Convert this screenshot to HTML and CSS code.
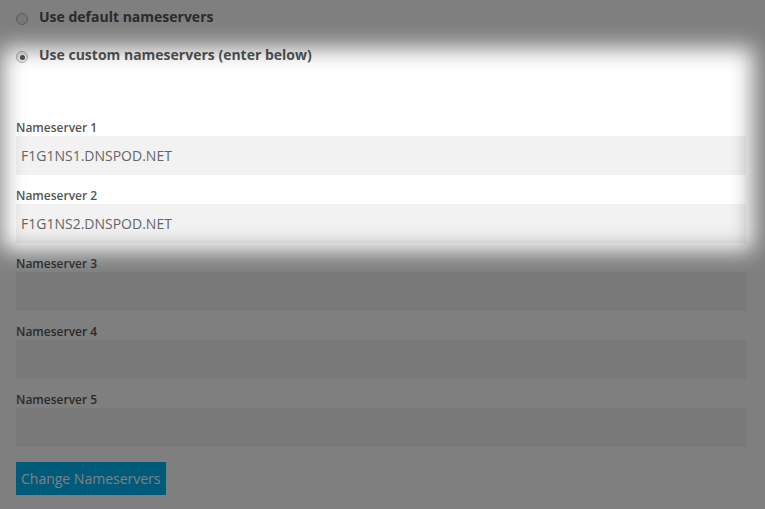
FILE: index.html
```html
<!DOCTYPE html>
<html lang="en">
<head>
<meta charset="utf-8">
<title>Nameservers</title>
<link rel="stylesheet" href="styles.css">
</head>
<body>
<form class="ns-form">
  <div class="radios">
    <label class="radio-row"><input class="radio" type="radio" name="ns"><span>Use default nameservers</span></label>
    <label class="radio-row"><input class="radio" type="radio" name="ns" checked><span>Use custom nameservers (enter below)</span></label>
  </div>
  <div class="fields">
    <div class="field"><label class="field-label">Nameserver 1</label><input class="field-input" type="text" value="F1G1NS1.DNSPOD.NET"></div>
    <div class="field"><label class="field-label">Nameserver 2</label><input class="field-input" type="text" value="F1G1NS2.DNSPOD.NET"></div>
    <div class="field"><label class="field-label">Nameserver 3</label><input class="field-input" type="text" value=""></div>
    <div class="field"><label class="field-label">Nameserver 4</label><input class="field-input" type="text" value=""></div>
    <div class="field"><label class="field-label">Nameserver 5</label><input class="field-input" type="text" value=""></div>
  </div>
  <button class="btn-primary" type="button">Change Nameservers</button>
</form>
<div class="tour-overlay"><div class="tour-hole"></div></div>
</body>
</html>
```

FILE: styles.css
```css
html, body {
  margin: 0;
  padding: 0;
  background: #ffffff;
}
body {
  font-family: "Open Sans", "Liberation Sans", sans-serif;
  color: #555555;
  width: 765px;
  height: 509px;
  overflow: hidden;
}
.ns-form {
  padding: 7px 19px 0 16px;
  display: flex;
  flex-direction: column;
}
.radios {
  display: flex;
  flex-direction: column;
  gap: 18px;
}
.radio-row {
  display: block;
  font-size: 14px;
  font-weight: 700;
  line-height: 20px;
  color: #555555;
}
.radio {
  -webkit-appearance: none;
  appearance: none;
  width: 12px;
  height: 12px;
  margin: 0 11px 0 0;
  border: 1px solid #b3b3b3;
  border-radius: 50%;
  background: #eeeeee;
  box-sizing: border-box;
  vertical-align: -3px;
  position: relative;
}
.radio:checked::after {
  content: "";
  position: absolute;
  left: 2.5px;
  top: 2.5px;
  width: 5px;
  height: 5px;
  border-radius: 50%;
  background: #555555;
}
.fields {
  margin-top: 54px;
  display: flex;
  flex-direction: column;
  gap: 12px;
}
.field {
  display: flex;
  flex-direction: column;
}
.field-label {
  font-size: 12px;
  font-weight: 600;
  line-height: 17px;
  color: #555555;
}
.field-input {
  height: 39px;
  box-sizing: border-box;
  border: none;
  background: #f2f2f2;
  padding: 0 5px;
  font-family: "Open Sans", "Liberation Sans", sans-serif;
  font-size: 14px;
  color: #666666;
  outline: none;
}
.btn-primary {
  align-self: flex-start;
  margin-top: 15px;
  height: 33px;
  padding: 0 5px;
  border: none;
  background: #00b4f4;
  color: #ffffff;
  font-family: "Open Sans", "Liberation Sans", sans-serif;
  font-size: 14px;
  line-height: 33px;
}
.tour-overlay {
  position: fixed;
  inset: 0;
  overflow: hidden;
  pointer-events: none;
}
.tour-hole {
  position: absolute;
  left: 2px;
  top: 48px;
  width: 751px;
  height: 202px;
  box-shadow: 0 0 0 1200px rgba(0, 0, 0, 0.5);
  filter: blur(11px);
}
```
